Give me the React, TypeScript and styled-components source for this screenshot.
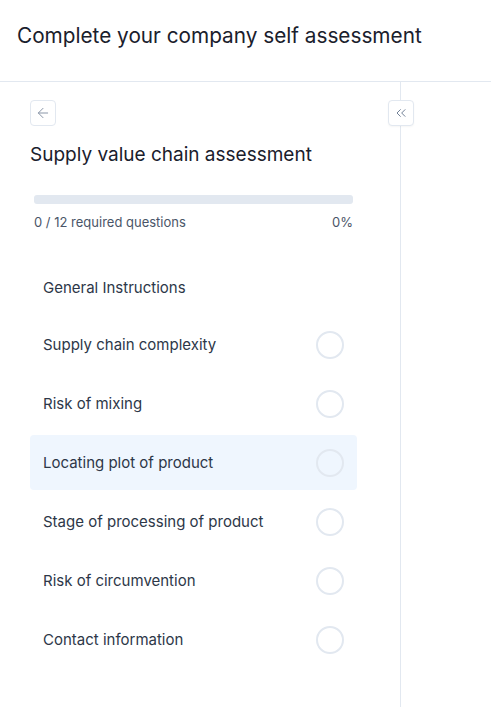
import React from 'react';
import styled, { createGlobalStyle } from 'styled-components';
import { ArrowLeft, ChevronsLeft } from 'lucide-react';

const GlobalStyle = createGlobalStyle`
  body {
    margin: 0;
    font-family: Inter, "Noto Sans", "Liberation Sans", sans-serif;
    background: #ffffff;
    color: #1a202c;
  }
`;

const Page = styled.div`
  display: flex;
  flex-direction: column;
  min-height: 707px;
`;

const Header = styled.header`
  height: 82px;
  box-sizing: border-box;
  border-bottom: 1px solid #e2e8f0;
  padding: 22px 17px 0;
`;

const Title = styled.h1`
  margin: 0;
  font-size: 20.75px;
  font-weight: 400;
  line-height: 28px;
  color: #1a202c;
`;

const Body = styled.div`
  flex: 1;
  display: flex;
`;

const Sidebar = styled.aside`
  position: relative;
  width: 401px;
  box-sizing: border-box;
  border-right: 1px solid #e2e8f0;
  padding: 18px 43px 0 30px;
`;

const IconButton = styled.button`
  width: 26px;
  height: 26px;
  padding: 0;
  display: flex;
  align-items: center;
  justify-content: center;
  border: 1px solid #e2e8f0;
  border-radius: 4px;
  background: #ffffff;
  color: #8a96a8;
  cursor: pointer;
`;

const CollapseButton = styled(IconButton)`
  position: absolute;
  top: 18px;
  right: -14px;
  color: #718096;
  box-shadow: 0 1px 2px rgba(0, 0, 0, 0.04);
`;

const Heading = styled.h2`
  margin: 16px 0 0;
  font-size: 19px;
  font-weight: 400;
  line-height: 26px;
  color: #1a202c;
`;

const Progress = styled.div`
  padding: 0 4px;
  margin-top: 27px;
`;

const Track = styled.div`
  height: 9px;
  border-radius: 3px;
  background: #e2e8f0;
  overflow: hidden;
`;

const Fill = styled.div`
  height: 100%;
  background: #3182ce;
`;

const ProgressLabel = styled.div`
  display: flex;
  justify-content: space-between;
  margin-top: 9px;
  font-size: 13px;
  line-height: 18px;
  color: #4a5568;
`;

const List = styled.ul`
  list-style: none;
  margin: 31px 0 0;
  padding: 0;
  display: flex;
  flex-direction: column;
  gap: 4px;
`;

const Row = styled.li<{ $active?: boolean; $status?: boolean }>`
  display: flex;
  align-items: center;
  justify-content: space-between;
  height: ${(p) => (p.$status ? 55 : 51)}px;
  padding: 0 13px;
  border-radius: 4px;
  background: ${(p) => (p.$active ? '#eff6fe' : 'transparent')};
  font-size: 15px;
  color: #2d3748;
`;

const Status = styled.span`
  width: 28px;
  height: 28px;
  box-sizing: border-box;
  border: 2px solid #e2e8f0;
  border-radius: 50%;
`;

const sections = [
  { name: 'General Instructions', status: false },
  { name: 'Supply chain complexity', status: true },
  { name: 'Risk of mixing', status: true },
  { name: 'Locating plot of product', status: true, active: true },
  { name: 'Stage of processing of product', status: true },
  { name: 'Risk of circumvention', status: true },
  { name: 'Contact information', status: true },
];

const App: React.FC = () => {
  const answered = 0;
  const required = 12;
  const pct = Math.round((answered / required) * 100);

  return (
    <Page>
      <GlobalStyle />
      <Header>
        <Title>Complete your company self assessment</Title>
      </Header>
      <Body>
        <Sidebar>
          <IconButton aria-label="Back">
            <ArrowLeft size={16} strokeWidth={1.5} />
          </IconButton>
          <CollapseButton aria-label="Collapse">
            <ChevronsLeft size={16} strokeWidth={1.5} />
          </CollapseButton>
          <Heading>Supply value chain assessment</Heading>
          <Progress>
            <Track>
              <Fill style={{ width: `${pct}%` }} />
            </Track>
            <ProgressLabel>
              <span>{answered} / {required} required questions</span>
              <span>{pct}%</span>
            </ProgressLabel>
          </Progress>
          <List>
            {sections.map((s) => (
              <Row key={s.name} $active={s.active} $status={s.status}>
                <span>{s.name}</span>
                {s.status && <Status />}
              </Row>
            ))}
          </List>
        </Sidebar>
      </Body>
    </Page>
  );
};

export default App;
